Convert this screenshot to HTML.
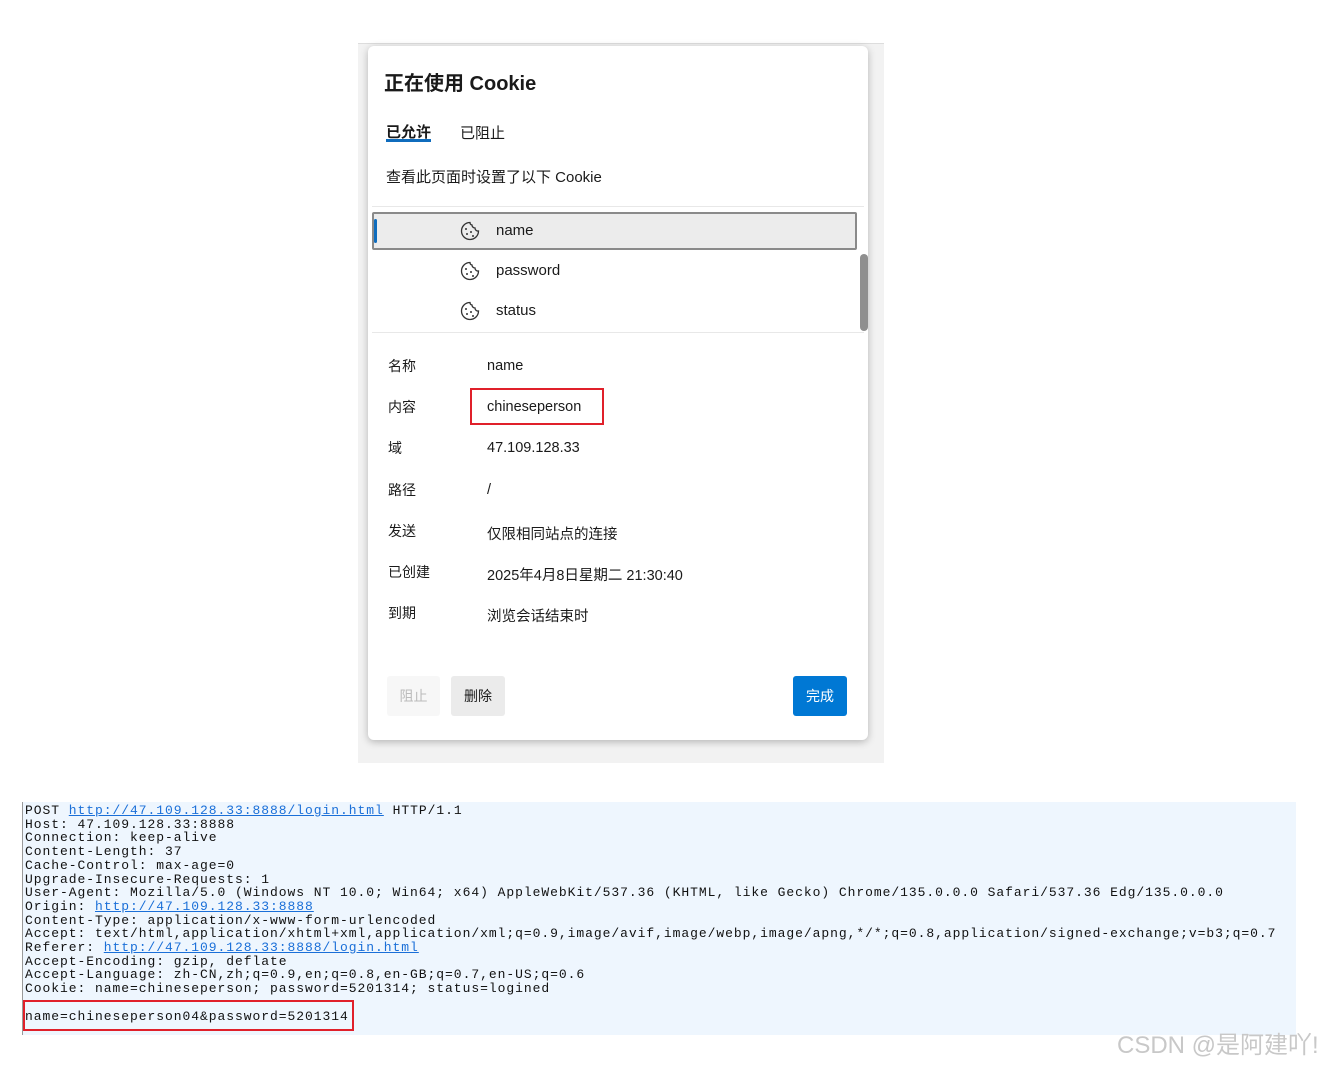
<!DOCTYPE html>
<html><head><meta charset="utf-8"><style>
body{margin:0;width:1327px;height:1067px;background:#fff;position:relative;overflow:hidden;font-family:"Liberation Sans","Noto Sans CJK SC",sans-serif;color:#1a1a1a}
.outer{position:absolute;left:358px;top:43px;width:526px;height:719px;background:#f2f2f2;border-top:1px solid #ddd}
.dlg{position:absolute;left:368px;top:46px;width:500px;height:694px;background:#fff;border-radius:6px;box-shadow:0 2px 8px rgba(0,0,0,.25)}
.a{position:absolute;white-space:nowrap}
.lab{position:absolute;left:20px;font-size:14px;margin-top:-1px}
.val{position:absolute;left:119px;font-size:14.5px;margin-top:2px}
.ck{position:absolute;left:92px;width:20px;height:20px}
pre{margin:0;font-family:"Liberation Mono",monospace;font-size:13px;letter-spacing:.95px;line-height:13.7px;color:#111}
pre a{color:#1a6fd8;text-decoration:underline}
</style></head><body>
<div class="outer"></div>
<div class="dlg">
 <div class="a" style="left:16px;top:21px;font-size:20px;font-weight:bold">正在使用 Cookie</div>
 <div class="a" style="left:18px;top:75px;font-size:15px;font-weight:bold">已允许</div>
 <div class="a" style="left:18px;top:93px;width:45px;height:3px;background:#0f6cbd"></div>
 <div class="a" style="left:92px;top:76px;font-size:15px">已阻止</div>
 <div class="a" style="left:18px;top:120px;font-size:15px">查看此页面时设置了以下 Cookie</div>
 <div class="a" style="left:4px;top:160px;width:492px;height:1px;background:#e8e8e8"></div>
 <div class="a" style="left:4px;top:166px;width:485px;height:38px;background:#ececec;border:2px solid #8a8a8a;box-sizing:border-box;border-radius:2px"></div>
 <div class="a" style="left:6px;top:173px;width:3px;height:24px;background:#0f6cbd;border-radius:2px"></div>
 <div class="a" style="left:492px;top:208px;width:8px;height:77px;background:#8f8f8f;border-radius:4px"></div>
 <div class="a" style="left:4px;top:286px;width:492px;height:1px;background:#e8e8e8"></div>
 <svg class="ck" style="top:175px" viewBox="0 0 20 20"><path d="M10 1.5A8.5 8.5 0 1 0 18.5 10 3 3 0 0 1 15 7 3 3 0 0 1 12 4 2.5 2.5 0 0 1 10 1.5Z" fill="none" stroke="#333" stroke-width="1.3"/><circle cx="6" cy="8" r="1" fill="#333"/><circle cx="7" cy="13" r="1" fill="#333"/><circle cx="11" cy="11" r="1" fill="#333"/><circle cx="13" cy="15" r="1" fill="#333"/></svg>
 <svg class="ck" style="top:215px" viewBox="0 0 20 20"><path d="M10 1.5A8.5 8.5 0 1 0 18.5 10 3 3 0 0 1 15 7 3 3 0 0 1 12 4 2.5 2.5 0 0 1 10 1.5Z" fill="none" stroke="#333" stroke-width="1.3"/><circle cx="6" cy="8" r="1" fill="#333"/><circle cx="7" cy="13" r="1" fill="#333"/><circle cx="11" cy="11" r="1" fill="#333"/><circle cx="13" cy="15" r="1" fill="#333"/></svg>
 <svg class="ck" style="top:255px" viewBox="0 0 20 20"><path d="M10 1.5A8.5 8.5 0 1 0 18.5 10 3 3 0 0 1 15 7 3 3 0 0 1 12 4 2.5 2.5 0 0 1 10 1.5Z" fill="none" stroke="#333" stroke-width="1.3"/><circle cx="6" cy="8" r="1" fill="#333"/><circle cx="7" cy="13" r="1" fill="#333"/><circle cx="11" cy="11" r="1" fill="#333"/><circle cx="13" cy="15" r="1" fill="#333"/></svg>
 <div class="a" style="left:128px;top:176px;font-size:15px">name</div>
 <div class="a" style="left:128px;top:216px;font-size:15px">password</div>
 <div class="a" style="left:128px;top:256px;font-size:15px">status</div>
 <div class="lab" style="top:311px">名称</div><div class="val" style="top:310px">name</div>
 <div class="lab" style="top:352px">内容</div><div class="val" style="top:351px">chineseperson</div>
 <div class="a" style="left:102px;top:342px;width:134px;height:37px;border:2px solid #e0202a;box-sizing:border-box"></div>
 <div class="lab" style="top:393px">域</div><div class="val" style="top:392px">47.109.128.33</div>
 <div class="lab" style="top:435px">路径</div><div class="val" style="top:434px">/</div>
 <div class="lab" style="top:476px">发送</div><div class="val" style="top:475px">仅限相同站点的连接</div>
 <div class="lab" style="top:517px">已创建</div><div class="val" style="top:516px">2025年4月8日星期二 21:30:40</div>
 <div class="lab" style="top:558px">到期</div><div class="val" style="top:557px">浏览会话结束时</div>
 <div class="a" style="left:19px;top:630px;width:53px;height:40px;background:#f7f7f7;border-radius:3px;color:#bbb;font-size:14px;line-height:40px;text-align:center">阻止</div>
 <div class="a" style="left:83px;top:630px;width:54px;height:40px;background:#ebebeb;border-radius:3px;font-size:14px;line-height:40px;text-align:center">删除</div>
 <div class="a" style="left:425px;top:630px;width:54px;height:40px;background:#0078d4;border-radius:3px;color:#fff;font-size:14px;line-height:40px;text-align:center">完成</div>
</div>
<div class="a" style="left:22px;top:802px;width:1273px;height:233px;background:#eef6fe;border-left:1px solid #999"></div>
<div class="a" style="left:25px;top:804px"><pre>POST <a>http://47.109.128.33:8888/login.html</a> HTTP/1.1
Host: 47.109.128.33:8888
Connection: keep-alive
Content-Length: 37
Cache-Control: max-age=0
Upgrade-Insecure-Requests: 1
User-Agent: Mozilla/5.0 (Windows NT 10.0; Win64; x64) AppleWebKit/537.36 (KHTML, like Gecko) Chrome/135.0.0.0 Safari/537.36 Edg/135.0.0.0
Origin: <a>http://47.109.128.33:8888</a>
Content-Type: application/x-www-form-urlencoded
Accept: text/html,application/xhtml+xml,application/xml;q=0.9,image/avif,image/webp,image/apng,*/*;q=0.8,application/signed-exchange;v=b3;q=0.7
Referer: <a>http://47.109.128.33:8888/login.html</a>
Accept-Encoding: gzip, deflate
Accept-Language: zh-CN,zh;q=0.9,en;q=0.8,en-GB;q=0.7,en-US;q=0.6
Cookie: name=chineseperson; password=5201314; status=logined
</pre></div>
<div class="a" style="left:25px;top:1010px"><pre>name=chineseperson04&amp;password=5201314</pre></div>
<div class="a" style="left:23px;top:1000px;width:331px;height:31px;border:2px solid #e0202a;box-sizing:border-box"></div>
<div class="a" style="left:1117px;top:1025px;font-size:24px;color:#c8c8c8">CSDN @是阿建吖!</div>
</body></html>
